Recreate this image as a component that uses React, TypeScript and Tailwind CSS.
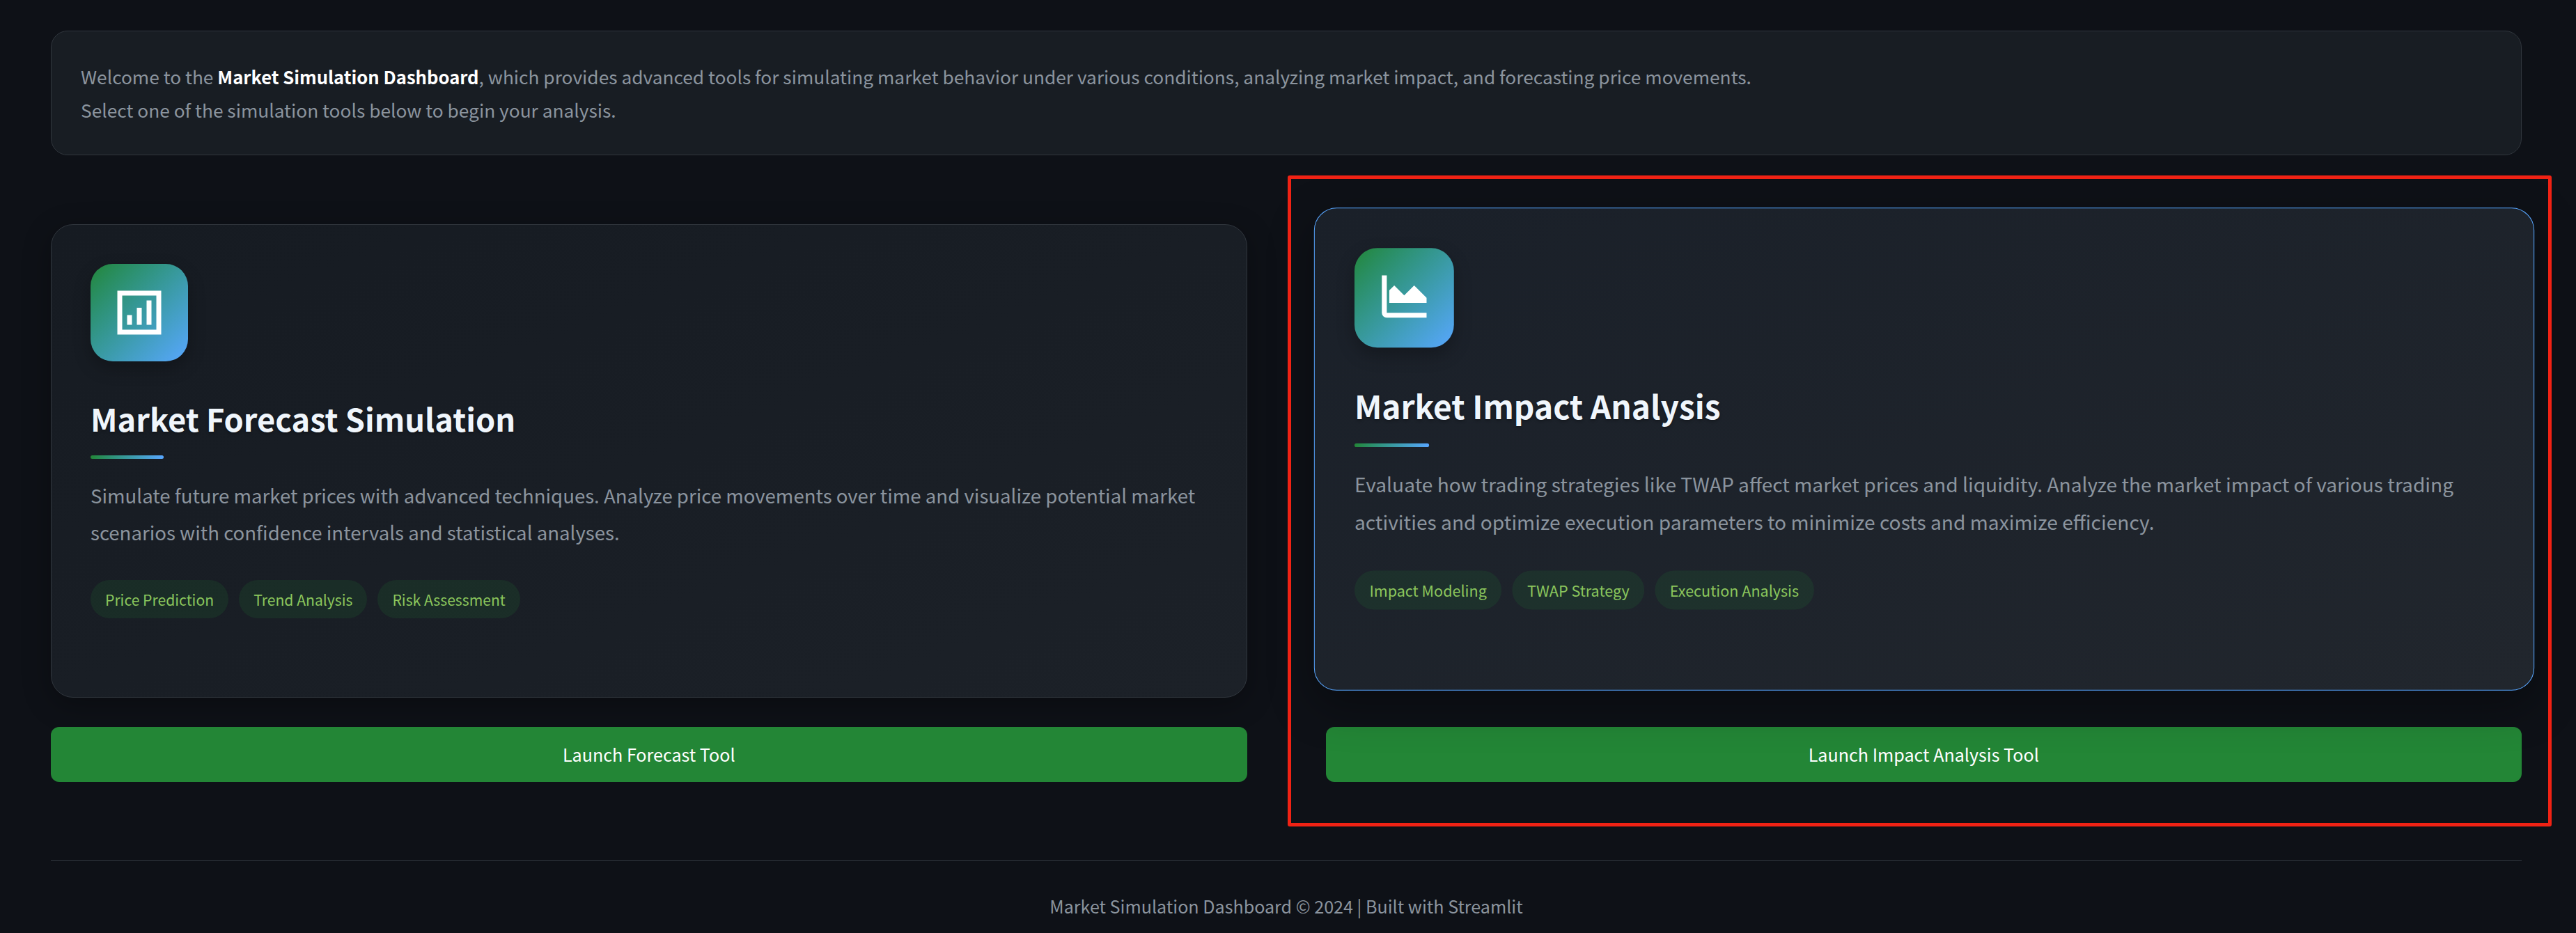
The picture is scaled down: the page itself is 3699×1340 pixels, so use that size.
const fontStack = "font-['Noto_Sans_CJK_SC','Liberation_Sans',sans-serif]";

function AssessmentIcon() {
  return (
    <svg viewBox="0 0 24 24" className="h-[84px] w-[84px] fill-white">
      <path fillRule="evenodd" d="M3 3h18v18H3zM5 5v14h14V5z" />
      <rect x="7" y="13" width="2" height="4" />
      <rect x="11" y="10" width="2" height="7" />
      <rect x="15" y="7" width="2" height="10" />
    </svg>
  );
}

function AreaChartIcon() {
  return (
    <svg viewBox="0 0 24 24" className="h-[84px] w-[84px] fill-white">
      <path d="M3 3h2v15h16v2H5a2 2 0 0 1-2-2z" />
      <path d="M6 14V9l2-2 4 4 4-4 5 5v2z" />
    </svg>
  );
}

interface ToolCardProps {
  icon: React.ReactNode;
  title: string;
  description: string;
  tags: string[];
  button: string;
  hovered?: boolean;
}

function ToolCard({ icon, title, description, tags, button, hovered }: ToolCardProps) {
  return (
    <div className="flex flex-col gap-[42px]">
      <div
        className={
          hovered
            ? "h-[680px] -translate-y-[17px] scale-[1.02] rounded-[32px] border border-[#58a6ff] bg-gradient-to-br from-[#1a2029] to-[#21262d] px-[56px] pt-[56px] shadow-[0_20px_60px_rgba(0,0,0,0.35)]"
            : "h-[680px] rounded-[32px] border border-[#30363d] bg-gradient-to-br from-[#161b22] to-[#1c2128] px-[56px] pt-[56px] shadow-[0_10px_40px_rgba(0,0,0,0.3)]"
        }
      >
        <div className="flex h-[140px] w-[140px] items-center justify-center rounded-[32px] bg-gradient-to-br from-[#238636] to-[#58a6ff] shadow-[0_10px_24px_rgba(0,0,0,0.25)]">
          {icon}
        </div>
        <h3 className="mt-[45px] text-[45.2px] leading-[74px] font-bold text-[#f0f6fc] [text-shadow:0_2px_4px_rgba(0,0,0,0.3)]">
          {title}
        </h3>
        <div className="mt-[16px] h-[5px] w-[105px] rounded-full bg-gradient-to-r from-[#238636] to-[#58a6ff]" />
        <p className="mt-[26px] text-[27.6px] leading-[53px] text-[#8b949e]">{description}</p>
        <div className="mt-[42px] flex gap-[15px]">
          {tags.map((tag) => (
            <span
              key={tag}
              className="flex h-[55px] items-center rounded-[28px] bg-[#238636]/15 px-[21px] text-[21.15px] text-[#8bc65c]"
            >
              {tag}
            </span>
          ))}
        </div>
      </div>
      <button className="h-[79px] rounded-[12px] bg-[#238636] text-[25.1px] text-white">{button}</button>
    </div>
  );
}

export default function App() {
  return (
    <div className={`relative min-h-[1340px] overflow-hidden bg-[#0e1117] pt-[44px] pr-[78px] pl-[73px] ${fontStack}`}>
      <div className="rounded-[24px] border border-[#30363d] bg-[#181d23] px-[42px] py-[41px] text-[26.3px] leading-[47.5px] text-[#8b949e]">
        <p>
          Welcome to the <strong className="text-[25.6px] font-bold text-white">Market Simulation Dashboard</strong>,
          which provides advanced tools for simulating market behavior under various conditions, analyzing market
          impact, and forecasting price movements.
        </p>
        <p>Select one of the simulation tools below to begin your analysis.</p>
      </div>

      <div className="mt-[99px] grid grid-cols-2 gap-[113px]">
        <ToolCard
          icon={<AssessmentIcon />}
          title="Market Forecast Simulation"
          description="Simulate future market prices with advanced techniques. Analyze price movements over time and visualize potential market scenarios with confidence intervals and statistical analyses."
          tags={["Price Prediction", "Trend Analysis", "Risk Assessment"]}
          button="Launch Forecast Tool"
        />
        <ToolCard
          hovered
          icon={<AreaChartIcon />}
          title="Market Impact Analysis"
          description="Evaluate how trading strategies like TWAP affect market prices and liquidity. Analyze the market impact of various trading activities and optimize execution parameters to minimize costs and maximize efficiency."
          tags={["Impact Modeling", "TWAP Strategy", "Execution Analysis"]}
          button="Launch Impact Analysis Tool"
        />
      </div>

      <footer className="mt-[112px] border-t border-[#30363d] pt-[45px] text-center text-[25.1px] leading-[40px] text-[#8b949e]">
        Market Simulation Dashboard © 2024 | Built with Streamlit
      </footer>

      {/* annotation box drawn over the hovered card */}
      <div className="pointer-events-none absolute top-[252px] left-[1849px] h-[935px] w-[1815px] rounded-[3px] border-[5px] border-[#f02214]" />
    </div>
  );
}
